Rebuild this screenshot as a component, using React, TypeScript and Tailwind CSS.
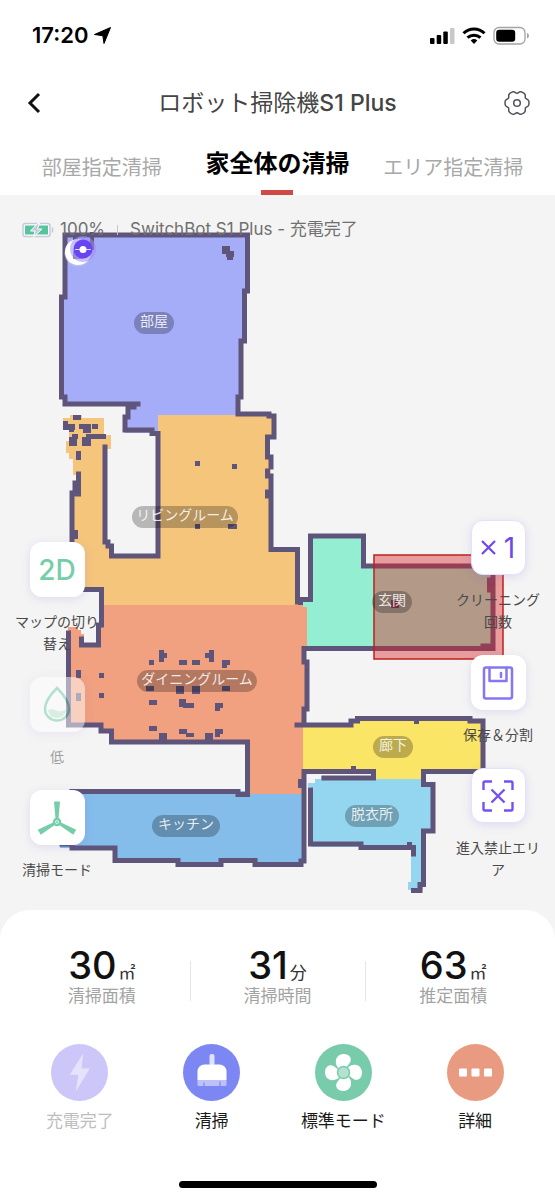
import { ReactNode, useState } from 'react';

type Tool = {
  id: string;
  label: string;
  icon: ReactNode;
  outlined?: boolean;
  disabled?: boolean;
};

type Room = {
  name: string;
  color: string;
  shape: string;
  x: number;
  y: number;
  width: number;
};

const tabs = ['部屋指定清掃', '家全体の清掃', 'エリア指定清掃'];

const stats = [
  { value: '30', unit: '㎡', label: '清掃面積' },
  { value: '31', unit: '分', label: '清掃時間' },
  { value: '63', unit: '㎡', label: '推定面積' },
];

const rooms: Room[] = [
  {
    name: '部屋',
    color: '#a5adf8',
    shape:
      'M65 235H247V291H244V341H241V397H238V415H159V433H125V417H128V404H65V397H62V297H65Z',
    x: 154,
    y: 323,
    width: 40,
  },
  {
    name: 'リビングルーム',
    color: '#f5c57c',
    shape:
      'M63 418H70V415H82V418H104V435H111V449H105V545H111V556H158V415H274V437H268V455H271V549H298V605H102V590H72V490H77V475H73V459H69V453H66V441H69V430H63Z',
    x: 185,
    y: 517,
    width: 106,
  },
  {
    name: 'ダイニングルーム',
    color: '#f1a180',
    shape:
      'M104 605H303V607H307V648H304V663H307V709H304V725H303V794H248V742H112V731H102V726H68V627H78V630H81V634H84V645H99V625H104Z',
    x: 197,
    y: 681,
    width: 120,
  },
  {
    name: '玄関',
    color: '#94efd2',
    shape: 'M303 602H311V536H364V566H493V648H307V607H303Z',
    x: 392,
    y: 602,
    width: 40,
  },
  {
    name: '廊下',
    color: '#fae566',
    shape: 'M303 725H353V719H483V771H421V779H376V771H303Z',
    x: 393,
    y: 747,
    width: 40,
  },
  {
    name: 'キッチン',
    color: '#84bdea',
    shape: 'M60 791H245V794H303V864H255V861H220V864H178V861H115V848H60Z',
    x: 186,
    y: 826,
    width: 68,
  },
  {
    name: '脱衣所',
    color: '#94d6f0',
    shape:
      'M308 783H315V779H321V776H373V779H423V785H433V831H423V890H408V882H411V847H311V787H308Z',
    x: 372,
    y: 816,
    width: 54,
  },
];

const walls = [
  'M65 235H247.500V291H244.500V341H241V397H238V414H269V416H274V437H267.500V457H271V467',
  'M65 235V297H61.500V397H65V404H138M134 404V407H128V417H125V430H152V433.500H158V556H111.500V546H108V542H105V447',
  'M267.500 471V476H271V492H267.500V496H271V549.500H297.500V602M300 599.500H310.500V536H363.500V566H493V648.500H304V662H307V709H304V725H297',
  'M489.500 580V590M483 646H493',
  'M78.500 474V494M75 483V494M72 493V589.500H101.500V625H98.500V645H81.500V639',
  'M68.500 633V725H101V731H111.500V742H247.500V794.500H238V791.500H72',
  'M62 844H72V848H115V860.500H178V864.500H221V860.500H255V864.500H301V861H304V771.500H373.500V778H324',
  'M304 725H351V721H357.500V718.500H470V721H483V771.500H423.500V784.500H433V831H423.500V884.500H420V890.500H413.500',
  'M310.500 790V844H361V847.500H413.500V854',
];

// furniture and other obstacles seen by the lidar: [x, y, width, height]
const obstacles: number[][] = [
  [90, 232, 4, 18], [73, 235, 5, 5], [73, 253, 10, 7],
  [222, 246, 8, 8], [226, 251, 8, 6], [227, 256, 6, 4],
  [73, 415, 8, 5], [63, 421, 5, 9], [66, 424, 9, 6], [69, 427, 5, 5],
  [79, 424, 12, 5], [83, 428, 8, 5], [92, 424, 6, 5], [86, 434, 20, 5],
  [82, 437, 9, 9], [69, 437, 8, 9], [72, 434, 6, 5], [76, 451, 5, 9], [78, 451, 3, 8],
  [74, 530, 4, 9],
  [195, 461, 5, 5], [232, 464, 5, 5], [195, 524, 5, 5], [228, 524, 9, 5],
  [298, 602, 5, 3],
  [391, 600, 8, 8],
  [76, 670, 5, 8], [99, 673, 5, 5], [76, 693, 5, 8], [99, 693, 5, 5],
  [149, 660, 5, 5], [159, 650, 5, 12], [161, 653, 6, 5], [179, 660, 8, 5], [192, 660, 8, 5],
  [209, 650, 5, 12], [205, 653, 6, 5], [222, 660, 8, 5], [222, 663, 5, 5],
  [146, 686, 8, 5], [176, 686, 8, 8], [192, 686, 8, 8], [222, 686, 8, 5],
  [149, 700, 8, 5], [179, 699, 7, 8], [183, 703, 11, 5], [215, 703, 8, 5], [215, 706, 5, 5],
  [149, 726, 8, 5], [179, 729, 8, 5], [186, 733, 8, 4], [159, 733, 8, 7], [205, 733, 8, 7],
  [215, 729, 8, 5], [215, 733, 5, 4],
  [298, 779, 4, 9], [414, 721, 5, 3], [351, 766, 5, 4], [407, 842, 5, 4],
];

function gearPath() {
  const points: string[] = [];
  for (let deg = 0; deg < 360; deg += 5) {
    const a = (deg * Math.PI) / 180;
    const r = 11.2 + 1.1 * Math.cos(6 * a) - 0.35 * Math.cos(12 * a);
    points.push(`${(14 + r * Math.cos(a)).toFixed(2)} ${(14 + r * Math.sin(a)).toFixed(2)}`);
  }
  return `M${points.join('L')}Z`;
}

const DropIcon = () => (
  <svg width="28" height="37" viewBox="0 0 28 37" fill="none">
    <path d="M14 2C11 5 2 15 2 23a12 11.500 0 0 0 24 0C26 15 17 5 14 2Z" stroke="#76cdaa" strokeWidth="2.500" />
    <path d="M5 24c3-1.500 6-.5 9 .8s6 .5 9-1.500c0 5-4 8.700-9 8.700S5.500 29 5 24Z" fill="#bfe7d8" />
  </svg>
);

const TurbineIcon = () => (
  <svg width="40" height="36" viewBox="-20 -22 40 36">
    {[0, 120, 240].map((deg) => (
      <path key={deg} d="M-3-20.500H3L1.500-3H-1.500Z" fill="#76cdaa" transform={`rotate(${deg})`} />
    ))}
    <circle r="3" fill="#fff" stroke="#76cdaa" strokeWidth="2.500" />
    <circle r="1" fill="#76cdaa" />
  </svg>
);

const TimesOneIcon = () => (
  <span className="flex items-center gap-2 text-[28px] text-[#6d47f2]">
    <svg width="15" height="15" viewBox="0 0 15 15" stroke="currentColor" strokeWidth="2.200">
      <path d="M1 1l13 13M14 1L1 14" />
    </svg>
    1
  </span>
);

const SaveIcon = () => (
  <svg width="32" height="34" viewBox="0 0 32 34" fill="none" stroke="#8577f3" strokeWidth="2.500" strokeLinejoin="round">
    <rect x="2" y="1.500" width="28" height="31" rx="2" />
    <path d="M7.500 2V15H24.500V2M19 7v4" strokeLinecap="round" />
  </svg>
);

const NoEntryIcon = () => (
  <svg width="32" height="32" viewBox="0 0 32 32" fill="none" stroke="#7450f5" strokeWidth="2.400">
    <path d="M1.500 10V3q0-1.500 1.500-1.500H10M22 1.500H29q1.500 0 1.500 1.500V10M30.500 22V29q0 1.500-1.500 1.500H22M10 30.500H3q-1.500 0-1.500-1.500V22" />
    <path d="M9.500 9.500l13 13M22.500 9.500l-13 13" />
  </svg>
);

const leftTools: Tool[] = [
  { id: 'map', label: 'マップの切り替え', icon: <span className="text-[28px] font-medium text-[#76cdaa]">2D</span> },
  { id: 'water', label: '低', icon: <DropIcon />, disabled: true },
  { id: 'mode', label: '清掃モード', icon: <TurbineIcon /> },
];

const rightTools: Tool[] = [
  { id: 'count', label: 'クリーニング回数', icon: <TimesOneIcon />, outlined: true },
  { id: 'save', label: '保存＆分割', icon: <SaveIcon /> },
  { id: 'block', label: '進入禁止エリア', icon: <NoEntryIcon />, outlined: true },
];

const actions = [
  {
    label: '充電完了',
    color: 'bg-[#cdc6f8]',
    disabled: true,
    icon: <path d="M3.700-19-9.700 2.300H-1.300L-3.700 19.300 10.300-4H2Z" fill="#e6e2fb" />,
  },
  {
    label: '清掃',
    color: 'bg-[#7c87f4]',
    icon: (
      <>
        <rect x="-2" y="-18.500" width="5" height="12" rx="2" fill="#dfe1fd" />
        <path d="M-14 7.500V-1a7 7 0 0 1 7-7H8a7 7 0 0 1 7 7V7.500Z" fill="#fff" />
        <path d="M-14 7.500H15V12q0 1.500-1.500 1.500H-12.500Q-14 13.500-14 12Z" fill="#bcc1fa" />
        <path d="M-7.500 10v3.500M8.500 9v4.500" stroke="#7c87f4" strokeWidth="1.200" />
      </>
    ),
  },
  {
    label: '標準モード',
    color: 'bg-[#79ccab]',
    icon: (
      <>
        {[0, 90, 180, 270].map((deg) => (
          <path
            key={deg}
            d="M-3-3C-9-6-10-17-1-18.500C6-19 9-14 6.500-10C5-7.500 3-6 2-3Z"
            fill="#fff"
            transform={`rotate(${deg})`}
          />
        ))}
        <circle r="6" fill="#b3e2d0" stroke="#79ccab" strokeWidth="1.500" />
      </>
    ),
  },
  {
    label: '詳細',
    color: 'bg-[#e89b80]',
    icon: (
      <path d="M-16-3.500h7v7h-7ZM-3.500-3.500h7v7h-7ZM9-3.500h7v7h-7Z" fill="#fff" stroke="#fff" strokeLinejoin="round" />
    ),
  },
];

function StatusBar() {
  return (
    <div className="flex h-[70px] items-center justify-between pr-6 pl-8">
      <div className="flex items-center gap-1.5 text-[22px] font-semibold">
        17:20
        <svg width="17" height="17" viewBox="0 0 17 17">
          <path d="M16.500.5 10 16.500 8.800 8.700.5 7.500Z" stroke="#000" strokeLinejoin="round" />
        </svg>
      </div>
      <svg width="101" height="20" viewBox="0 0 101 20">
        <rect x="0" y="13" width="4.500" height="6" rx="1" />
        <rect x="6.700" y="10" width="4.500" height="9" rx="1" />
        <rect x="13.300" y="6.500" width="4.500" height="12.500" rx="1" />
        <rect x="20" y="3" width="4.500" height="16" rx="1" fill="#c8c8c8" />
        <g fill="none" stroke="#000" strokeWidth="3">
          <path d="M33.500 8.300a15 15 0 0 1 21 0" />
          <path d="M37.500 12.700a9.500 9.500 0 0 1 13 0" />
        </g>
        <path d="M40.700 15.500a5 5 0 0 1 6.600 0L44 19Z" />
        <rect x="64" y="2.500" width="31" height="16.500" rx="5" fill="none" stroke="#a3a3a3" strokeWidth="1.300" />
        <rect x="66.200" y="4.700" width="19" height="12" rx="3" />
        <path d="M97 8v5.500q2-.7 2-2.700T97 8Z" fill="#a3a3a3" />
      </svg>
    </div>
  );
}

function FloorMap() {
  return (
    <svg
      className="absolute inset-0 h-full w-full"
      viewBox="0 195 555 715"
      preserveAspectRatio="xMidYMin meet"
      role="img"
      aria-label="間取り"
    >
      {rooms.map((room) => (
        <path key={room.name} d={room.shape} fill={room.color} />
      ))}
      <path d={walls.join('')} fill="none" stroke="#5f557b" strokeWidth="5" strokeLinecap="square" />
      {obstacles.map(([x, y, width, height]) => (
        <rect key={`${x}-${y}-${width}`} x={x} y={y} width={width} height={height} fill="#5f557b" />
      ))}
      <rect x="374" y="555" width="129" height="104" fill="#dd2020" fillOpacity=".41" stroke="#b9221d" strokeWidth="1.500" />

      {/* charging dock and robot */}
      <circle cx="78" cy="253" r="13.500" fill="#c9c8e6" opacity=".6" />
      <circle cx="78" cy="252" r="13" fill="#fff" />
      <rect x="73" y="251" width="10" height="8" fill="#8a80b8" />
      <circle cx="83" cy="249" r="13" fill="#9d8df5" fillOpacity=".55" />
      <circle cx="83" cy="249" r="9.500" fill="#6745f3" />
      <path d="M75 249.500H91" stroke="#d8d0ff" strokeWidth="1" />
      <circle cx="83" cy="249.500" r="3.500" fill="#fff" />

      {rooms.map((room) => (
        <g key={room.name}>
          <rect
            x={room.x - room.width / 2}
            y={room.y - 11}
            width={room.width}
            height="22"
            rx="11"
            fillOpacity=".25"
          />
          <text x={room.x} y={room.y + 3} textAnchor="middle" fontSize="14" fill="#fff" fillOpacity=".85">
            {room.name}
          </text>
        </g>
      ))}
    </svg>
  );
}

function ToolColumn({ tools }: { tools: Tool[] }) {
  return (
    <div className="flex w-[90px] flex-col gap-[22px]">
      {tools.map((tool) => (
        <button
          key={tool.id}
          type="button"
          disabled={tool.disabled}
          className={`flex flex-col items-center gap-3.5 text-sm leading-[22px] text-[#4a4a4a] ${
            tool.disabled ? 'opacity-50' : ''
          }`}
        >
          <span
            className={`flex h-[55px] w-[55px] items-center justify-center rounded-xl bg-white shadow-[0_2px_10px_rgba(110,90,220,0.16)] ${
              tool.outlined ? 'border border-[#e6e1fb]' : ''
            }`}
          >
            {tool.icon}
          </span>
          <span>{tool.label}</span>
        </button>
      ))}
    </div>
  );
}

export default function App() {
  const [activeTab, setActiveTab] = useState(tabs[1]);

  return (
    <div className="flex min-h-screen flex-col bg-[#f4f4f4] font-['Inter','Noto_Sans_CJK_JP',sans-serif] text-black">
      <header className="bg-white">
        <StatusBar />
        <div className="flex h-[66px] items-center justify-between px-6">
          <button type="button" aria-label="戻る" className="flex w-7 justify-start">
            <svg width="20" height="24" viewBox="0 0 20 24" fill="none" stroke="#111" strokeWidth="3">
              <path d="M15 3 6 12l9 9" />
            </svg>
          </button>
          <h1 className="text-[23px] text-[#444]">
            ロボット掃除機<span className="font-medium">S1 Plus</span>
          </h1>
          <button type="button" aria-label="設定">
            <svg width="28" height="28" viewBox="0 0 28 28" fill="none" stroke="#52525e" strokeWidth="1.500">
              <path d={gearPath()} />
              <circle cx="14" cy="14" r="3.300" />
            </svg>
          </button>
        </div>

        <nav className="grid h-[59px] grid-cols-3 px-3.5">
          {tabs.map((tab) => (
            <button
              key={tab}
              type="button"
              onClick={() => setActiveTab(tab)}
              className={`relative whitespace-nowrap ${
                tab === activeTab ? 'pb-1 text-2xl font-bold' : 'pt-1 text-xl text-[#a8a8a8]'
              }`}
            >
              {tab}
              {tab === activeTab && (
                <span className="absolute bottom-0 left-1/2 h-[5px] w-8 -translate-x-1/2 bg-[#cf4a45]" />
              )}
            </button>
          ))}
        </nav>
      </header>

      <main className="relative">
        <FloorMap />
        <div className="relative flex h-[70px] items-center px-[22px] text-[17px] text-[#707070]">
          <svg width="32" height="16" viewBox="0 0 32 16">
            <rect x="1" y="1.500" width="27" height="13" rx="2.500" fill="#fff" stroke="#c5cbda" strokeWidth="1.500" />
            <rect x="3" y="3.500" width="23" height="9" fill="#57c49c" />
            <path d="M30.500 5.500v5" stroke="#c5cbda" strokeWidth="1.500" />
            <path d="M16 1 8.500 9H13l-1.500 6L20 7H15.500L17.500 1Z" fill="#c5cbda" stroke="#fff" />
          </svg>
          <span className="ml-1.5">100%</span>
          <span className="mx-3 h-2.5 w-px bg-[#c8c8c8]" />
          <span>SwitchBot S1 Plus - 充電完了</span>
        </div>
        <div className="relative mt-[255px] flex items-end justify-between px-3 pb-[29px]">
          <ToolColumn tools={leftTools} />
          <ToolColumn tools={rightTools} />
        </div>
      </main>

      <section className="flex grow flex-col rounded-t-[30px] bg-white px-3.5 pt-9">
        <div className="grid grid-cols-3">
          {stats.map((stat, i) => (
            <div key={stat.label} className="relative flex flex-col items-center">
              {i > 0 && <span className="absolute top-[15px] left-0 h-10 w-px bg-[#e6e6e6]" />}
              <p className="flex items-baseline gap-0.5">
                <span className="text-[38px] leading-[38px] font-medium text-[#111]">{stat.value}</span>
                <span className="text-[17px] leading-none text-[#333]">{stat.unit}</span>
              </p>
              <p className="text-[17px] leading-6 text-[#a3a3a3]">{stat.label}</p>
            </div>
          ))}
        </div>

        <div className="mt-9 grid grid-cols-4">
          {actions.map((action) => (
            <button
              key={action.label}
              type="button"
              disabled={action.disabled}
              className={`flex flex-col items-center gap-2 text-[17px] leading-6 ${
                action.disabled ? 'text-[#bdbdbd]' : 'text-[#1a1a1a]'
              }`}
            >
              <span className={`rounded-full ${action.color}`}>
                <svg width="57" height="57" viewBox="-28.5 -28.5 57 57">
                  {action.icon}
                </svg>
              </span>
              {action.label}
            </button>
          ))}
        </div>

        <div className="mx-auto mt-auto mb-3 h-[7px] w-[198px] rounded-full bg-black" />
      </section>
    </div>
  );
}
